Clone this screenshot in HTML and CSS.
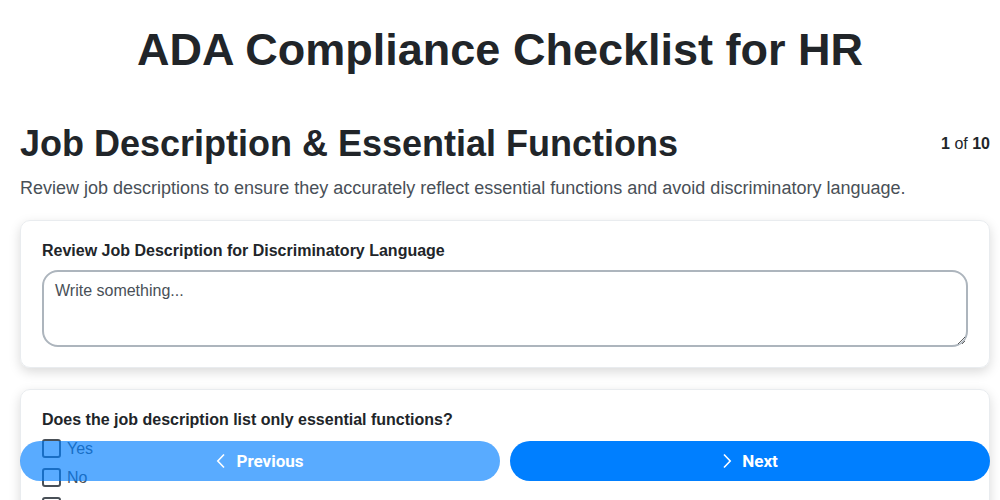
FILE: index.html
```html
<!DOCTYPE html>
<html lang="en">

<head>
    <meta charset="UTF-8">
    <title>ADA Compliance Checklist for HR</title>
    <link rel="stylesheet" href="styles.css">
</head>

<body>

    <h1 class="page-title">ADA Compliance Checklist for HR</h1>

    <!-- Section header -->
    <div class="section-head">
        <h2>Job Description &amp; Essential Functions</h2>
        <div class="step-count"><b>1</b> of <b>10</b></div>
    </div>
    <p class="section-desc">Review job descriptions to ensure they accurately reflect essential functions and avoid discriminatory language.</p>

    <!-- Questions -->
    <div class="card">
        <label class="question" for="q1">Review Job Description for Discriminatory Language</label>
        <textarea id="q1" placeholder="Write something..."></textarea>
    </div>

    <div class="card">
        <div class="question short">Does the job description list only essential functions?</div>
        <label class="option"><input type="checkbox"> Yes</label>
        <label class="option"><input type="checkbox"> No</label>
        <label class="option"><input type="checkbox"> Not sure</label>
    </div>

    <!-- Navigation -->
    <div class="nav-buttons">
        <button class="nav-btn prev">
            <svg width="10" height="16" viewBox="0 0 10 16"><path d="M8 1.5 1.8 8 8 14.5" fill="none" stroke="white" stroke-width="1.6"/></svg>
            Previous
        </button>
        <button class="nav-btn next">
            <svg width="10" height="16" viewBox="0 0 10 16"><path d="M2 1.5 8.2 8 2 14.5" fill="none" stroke="white" stroke-width="1.6"/></svg>
            Next
        </button>
    </div>

</body>

</html>
```

FILE: styles.css
```css
body {
    margin: 0;
    padding: 0 10px 80px 20px;
    font-family: "Liberation Sans", Arial, sans-serif;
    color: #212529;
    background: white;
}

.page-title {
    margin: 0 0 0 -10px;
    padding-top: 22px;
    font-size: 45px;
    line-height: 56px;
    text-align: center;
}

.section-head {
    display: flex;
    justify-content: space-between;
    align-items: center;
    margin-top: 44px;
}

.section-head h2 {
    margin: 0;
    font-size: 36px;
    line-height: 44px;
}

.step-count {
    font-size: 16px;
}

.section-desc {
    margin: 10px 0 20px;
    font-size: 18px;
    line-height: 24px;
    color: #495057;
}

.card {
    border: 1px solid #e9ecef;
    border-radius: 10px;
    padding: 20px 21px;
    margin-bottom: 21px;
    box-shadow: 0 4px 12px rgba(0, 0, 0, 0.15);
}

.question {
    display: block;
    font-weight: bold;
    font-size: 16px;
    line-height: 20px;
    margin-bottom: 9px;
}

.question.short {
    margin-bottom: 4px;
}

textarea {
    display: block;
    box-sizing: border-box;
    width: 100%;
    height: 77px;
    padding: 10px 11px;
    border: 2px solid #adb5bd;
    border-radius: 16px;
    font-family: "Liberation Sans", Arial, sans-serif;
    font-size: 16px;
    color: #495057;
}

textarea::placeholder {
    color: #495057;
}

.option {
    display: flex;
    align-items: center;
    gap: 6px;
    height: 29px;
    font-size: 16px;
    color: #495057;
}

.option input {
    appearance: none;
    margin: 0;
    width: 19px;
    height: 19px;
    border: 2px solid #495057;
    border-radius: 3px;
}

.nav-buttons {
    position: fixed;
    left: 20px;
    right: 10px;
    bottom: 19px;
    display: flex;
    gap: 10px;
}

.nav-btn {
    flex: 1;
    height: 40px;
    border: none;
    border-radius: 20px;
    background: #007fff;
    color: white;
    font-family: Roboto, sans-serif;
    font-weight: bold;
    font-size: 17px;
    display: flex;
    align-items: center;
    justify-content: center;
    gap: 10px;
    cursor: pointer;
}

.nav-btn.prev {
    opacity: 0.65;
}
```
